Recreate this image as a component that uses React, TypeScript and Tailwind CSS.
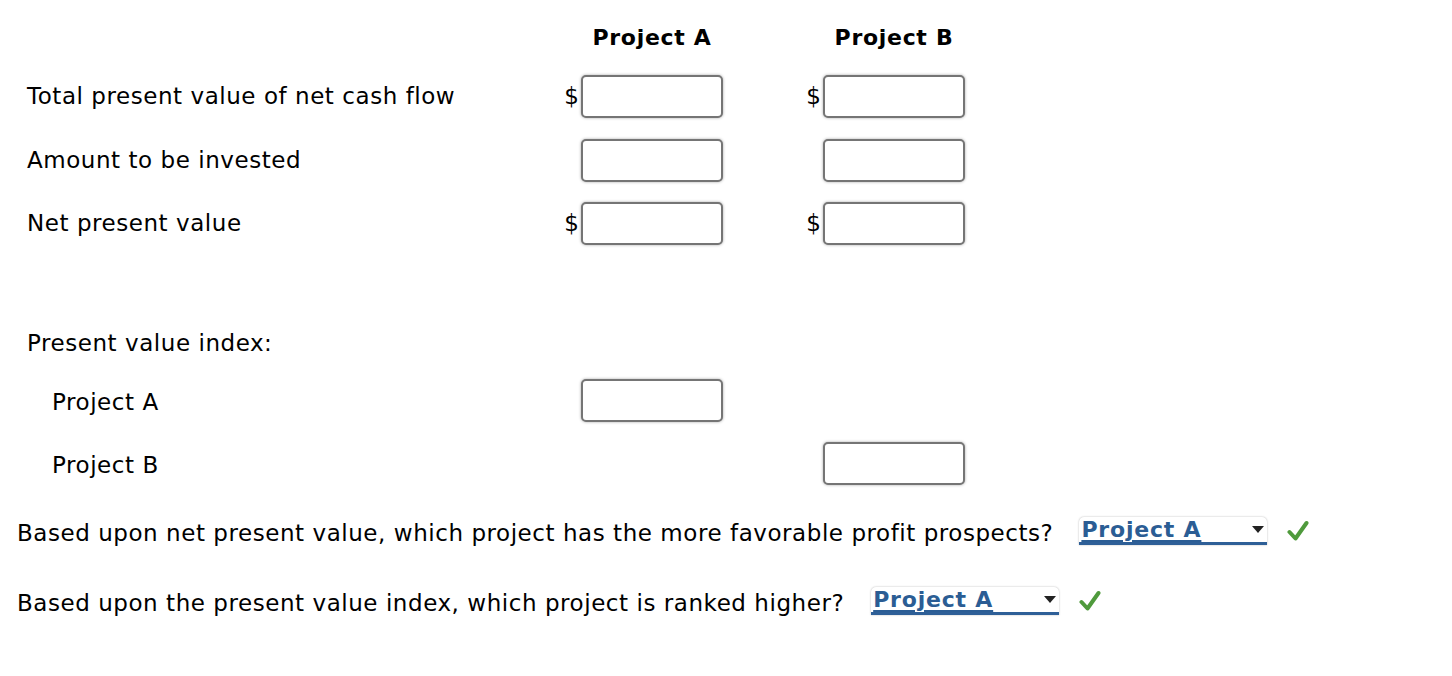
import React from 'react';

const font = { fontFamily: '"DejaVu Sans", Verdana, sans-serif' };

function Box() {
    return (
        <div className="w-[142px] h-[43px] rounded-[5px] border-2 border-[#757575] bg-white shadow-[0_0_3px_rgba(0,0,0,0.35)]" />
    );
}

function Cell({ dollar }: { dollar?: boolean }) {
    return (
        <div className="flex items-center w-[242px]">
            <div className="w-[26px] pr-[2px] text-right tracking-normal text-black">{dollar ? '$' : ''}</div>
            <Box />
        </div>
    );
}

function Check() {
    return (
        <svg width="22" height="22" viewBox="0 0 22 22" className="ml-[20px]">
            <path d="M2.5 12 L8.5 18.5 L19.5 3" fill="none" stroke="#4f9a3c" strokeWidth="4" strokeLinecap="round" strokeLinejoin="round" />
        </svg>
    );
}

function Answer() {
    return (
        <div className="flex items-center">
            <div className="relative w-[188px] h-[28px] rounded-t-[5px] bg-white shadow-[0_0_2px_rgba(0,0,0,0.3)] border-b-[3px] border-[#2e5f97] flex items-center pl-[2px]">
                <span className="text-[22px] font-bold text-[#2b5d94] underline underline-offset-[3px] decoration-2 tracking-[0.8px]">Project A</span>
                <svg width="12" height="8" viewBox="0 0 12 8" className="absolute right-[3px] top-[9px]">
                    <path d="M0 0 H12 L6 7 Z" fill="#222" />
                </svg>
            </div>
            <Check />
        </div>
    );
}

export default function App() {
    const rows = [
        { label: 'Total present value of net cash flow', dollar: true },
        { label: 'Amount to be invested', dollar: false },
        { label: 'Net present value', dollar: true },
    ];

    return (
        <div className="w-[1452px] h-[676px] bg-white text-black text-[23px] tracking-[0.55px]" style={font}>
            {/* header */}
            <div className="flex pt-[24px] h-[75px]">
                <div className="w-[555px]" />
                <div className="w-[242px] pl-[26px]">
                    <div className="w-[142px] text-center text-[22px] font-bold leading-[28px] tracking-[0.7px] whitespace-nowrap">Project A</div>
                </div>
                <div className="w-[242px] pl-[26px]">
                    <div className="w-[142px] text-center text-[22px] font-bold leading-[28px] tracking-[0.7px] whitespace-nowrap">Project B</div>
                </div>
            </div>

            {/* main table */}
            <div className="flex flex-col gap-[20.5px]">
                {rows.map((r) => (
                    <div key={r.label} className="flex items-center h-[43px]">
                        <div className="w-[555px] pl-[27px]">{r.label}</div>
                        <Cell dollar={r.dollar} />
                        <Cell dollar={r.dollar} />
                    </div>
                ))}
            </div>

            {/* present value index */}
            <div className="pl-[27px] mt-[84px] leading-[28px]">Present value index:</div>
            <div className="flex items-center h-[43px] mt-[22px]">
                <div className="w-[555px] pl-[52px] pt-[4px]">Project A</div>
                <Cell />
            </div>
            <div className="flex items-center h-[43px] mt-[20px]">
                <div className="w-[555px] pl-[52px] pt-[4px]">Project B</div>
                <div className="w-[242px]" />
                <Cell />
            </div>

            {/* questions */}
            <div className="flex items-center pl-[17px] mt-[32px] h-[28px]">
                <span className="mr-[26px] pt-[4px] whitespace-nowrap">Based upon net present value, which project has the more favorable profit prospects?</span>
                <Answer />
            </div>
            <div className="flex items-center pl-[17px] mt-[42px] h-[28px]">
                <span className="mr-[27px] pt-[4px] whitespace-nowrap">Based upon the present value index, which project is ranked higher?</span>
                <Answer />
            </div>
        </div>
    );
}
